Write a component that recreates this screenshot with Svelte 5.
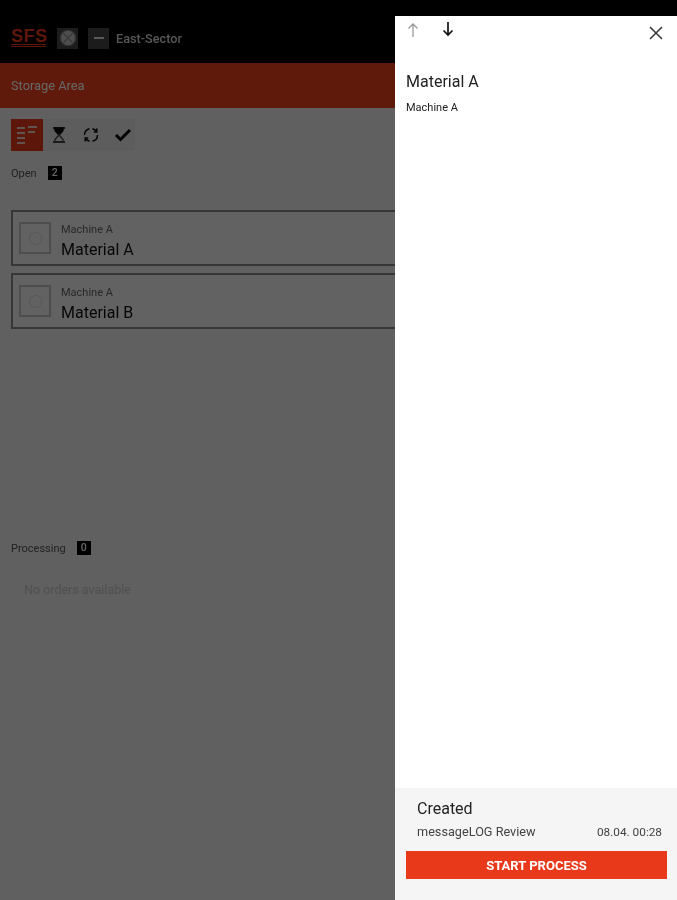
<script>
  const tabs = ['list', 'wait', 'sync', 'done'];
  const openOrders = [
    { machine: 'Machine A', material: 'Material A' },
    { machine: 'Machine A', material: 'Material B' }
  ];
</script>

<div class="page">
  <div class="app">
    <header>
      <span class="logo">SFS</span>
      <span class="square first">
        <svg width="18" height="18" viewBox="0 0 18 18" fill="#c4c4c4" stroke="#8a8a8a" stroke-width="1.200">
          <circle cx="9" cy="9" r="7.500" />
          <path d="M4.500 4.500l9 9M13.500 4.500l-9 9" fill="none" />
        </svg>
      </span>
      <span class="square second"><span class="dash"></span></span>
      <span class="sector">East-Sector</span>
    </header>
    <div class="title-bar">Storage Area</div>
    <main>
      <div class="tabs">
        {#each tabs as tab, i}
          <span class="tab" class:active={i === 0}>
            {#if tab === 'list'}
              <svg width="24" height="22" viewBox="0 0 24 22" fill="none" stroke="#f0d0c8" stroke-width="2">
                <path d="M2 4h8M2 9h8M2 14h8M2 19h8M13 3h9M13 8h7" />
              </svg>
            {:else if tab === 'wait'}
              <svg width="12" height="16" viewBox="0 0 12 16" fill="none" stroke="#0b0b0b" stroke-width="1.500">
                <path d="M0 1h12M0 15h12" />
                <path d="M2 1h8v2.500L6 8 2 3.500z" fill="#0b0b0b" />
                <path d="M2 15v-2.500L6 8l4 4.500V15" stroke="#555" />
              </svg>
            {:else if tab === 'sync'}
              <svg width="16" height="16" viewBox="0 0 16 16" fill="none" stroke="#0b0b0b" stroke-width="1.500">
                <path d="M1.500 8a6.500 6.500 0 0 1 5-6.300M9.500 1.700a6.500 6.500 0 0 1 4 2.800M14.500 8a6.500 6.500 0 0 1-5 6.300M6.500 14.300a6.500 6.500 0 0 1-4-2.800" />
                <path d="M13.800 1.500v3.500h-3M2.200 14.500V11h3" />
              </svg>
            {:else}
              <svg width="18" height="14" viewBox="0 0 18 14" fill="none" stroke="#050505" stroke-width="3">
                <path d="M2 7l4.500 4.500L16 2" />
              </svg>
            {/if}
          </span>
        {/each}
      </div>

      <div class="section-head"><span>Open</span><b>2</b></div>
      <div class="orders">
        {#each openOrders as order}
          <div class="order">
            <span class="check"><i></i></span>
            <div class="order-text">
              <small>{order.machine}</small>
              <strong>{order.material}</strong>
            </div>
          </div>
        {/each}
      </div>

      <div class="section-head processing"><span>Processing</span><b>0</b></div>
      <p class="empty">No orders available</p>
    </main>
  </div>

  <div class="scrim"></div>

  <aside class="panel">
    <div class="panel-top">
      <svg class="up" width="14" height="16" viewBox="0 0 14 16" fill="none" stroke="#9a9a9a" stroke-width="1.300">
        <path d="M7 15V2M2.500 6.500L7 2l4.500 4.500" />
      </svg>
      <svg class="down" width="14" height="16" viewBox="0 0 14 16" fill="none" stroke="#111" stroke-width="1.700">
        <path d="M7 1v13M2.500 9.500L7 14l4.500-4.500" />
      </svg>
      <svg class="close" width="14" height="14" viewBox="0 0 14 14" fill="none" stroke="#333" stroke-width="1.500">
        <path d="M1 1l12 12M13 1L1 13" />
      </svg>
    </div>
    <h2>Material A</h2>
    <p class="machine">Machine A</p>

    <div class="panel-foot">
      <h3>Created</h3>
      <div class="meta">
        <span>messageLOG Review</span>
        <span class="date">08.04. 00:28</span>
      </div>
      <button>START PROCESS</button>
    </div>
  </aside>
</div>

<style>
  :global(body) {
    margin: 0;
    background: #000;
  }

  .page {
    position: relative;
    width: 677px;
    height: 900px;
    overflow: hidden;
    background: #efefef;
    font-family: Roboto, 'Liberation Sans', sans-serif;
  }

  .app {
    filter: blur(0.7px);
  }

  header {
    display: flex;
    align-items: center;
    height: 63px;
    box-sizing: border-box;
    padding: 13px 0 0 11px;
    background: #000;
    color: #fff;
  }

  .logo {
    width: 35px;
    font-family: 'Liberation Sans', sans-serif;
    font-size: 18px;
    font-weight: 700;
    letter-spacing: 0.5px;
    line-height: 15px;
    color: #e8391a;
    border-bottom: 3px double #e8391a;
  }

  .square {
    display: flex;
    align-items: center;
    justify-content: center;
    width: 21px;
    height: 21px;
    background: #484848;
  }

  .first {
    margin-left: 11px;
  }

  .second {
    margin-left: 10px;
  }

  .dash {
    width: 10px;
    height: 0;
    border-top: 2px dashed #e0e0e0;
  }

  .sector {
    margin-left: 7px;
    font-size: 12.700px;
    font-weight: 500;
    color: #d8d8d8;
  }

  .title-bar {
    display: flex;
    align-items: center;
    height: 45px;
    box-sizing: border-box;
    padding: 0 0 0 11px;
    background: #f0431f;
    font-size: 12.800px;
    color: #fff;
  }

  main {
    padding: 11px 0 0 11px;
  }

  .tabs {
    display: flex;
    width: 124px;
    background: #e8e8e8;
  }

  .tab {
    display: flex;
    flex: none;
    align-items: center;
    justify-content: center;
    width: 32px;
    height: 32px;
  }

  .tab.active {
    background: #e8391a;
  }

  .section-head {
    display: flex;
    align-items: center;
    gap: 11px;
    margin-top: 15px;
    font-size: 11px;
    color: #555;
  }

  .section-head b {
    width: 14px;
    height: 14px;
    font-size: 10.500px;
    font-weight: 500;
    line-height: 14px;
    text-align: center;
    color: #fff;
    background: #000;
  }

  .orders {
    display: flex;
    flex-direction: column;
    gap: 7px;
    margin-top: 30px;
  }

  .order {
    display: flex;
    align-items: center;
    width: 420px;
    height: 56px;
    box-sizing: border-box;
    padding-left: 6px;
    background: #f4f4f4;
    border: 2px solid #8a8a8a;
  }

  .check {
    display: flex;
    align-items: center;
    justify-content: center;
    width: 32px;
    height: 32px;
    box-sizing: border-box;
    border: 2px solid #c4c4c4;
  }

  .check i {
    width: 13px;
    height: 13px;
    box-sizing: border-box;
    border: 1px solid #dadada;
    border-radius: 50%;
  }

  .order-text {
    display: flex;
    flex-direction: column;
    margin-left: 10px;
    padding-top: 5px;
  }

  .order-text small {
    font-size: 11px;
    color: #666;
  }

  .order-text strong {
    margin-top: 4px;
    font-size: 16px;
    font-weight: 400;
    color: #111;
  }

  .section-head.processing {
    margin-top: 212px;
  }

  .empty {
    margin: 27px 0 0 13px;
    font-size: 12.500px;
    color: #c8c8c8;
  }

  .scrim {
    position: absolute;
    inset: 0;
    background: rgba(0, 0, 0, 0.6);
  }

  .panel {
    position: absolute;
    top: 16px;
    right: 0;
    bottom: 0;
    display: flex;
    flex-direction: column;
    width: 282px;
    background: #fff;
    filter: blur(0.4px);
  }

  .panel-top {
    position: relative;
    height: 56px;
    flex: none;
  }

  .panel-top svg {
    position: absolute;
  }

  .up {
    top: 6px;
    left: 11px;
  }

  .down {
    top: 5px;
    left: 46px;
  }

  .close {
    top: 10px;
    right: 14px;
  }

  h2 {
    margin: 0 0 0 11px;
    font-size: 16px;
    font-weight: 400;
    line-height: 20px;
    color: #222;
  }

  .machine {
    margin: 9px 0 0 11px;
    font-size: 11px;
    line-height: 14px;
    color: #222;
  }

  .panel-foot {
    margin-top: auto;
    height: 112px;
    box-sizing: border-box;
    padding: 11px 11px 0;
    background: #f5f5f5;
  }

  h3 {
    margin: 0 0 0 11px;
    font-size: 16px;
    font-weight: 400;
    line-height: 20px;
    color: #222;
  }

  .meta {
    display: flex;
    justify-content: space-between;
    align-items: center;
    margin: 5px 4px 0 11px;
    font-size: 12.700px;
    line-height: 16px;
    color: #444;
  }

  .date {
    font-size: 11.800px;
  }

  button {
    display: block;
    width: 261px;
    height: 28px;
    margin-top: 11px;
    padding: 0;
    border: 0;
    background: #e8391a;
    font-family: Roboto, 'Liberation Sans', sans-serif;
    font-size: 13px;
    font-weight: 700;
    color: #fff;
  }
</style>
